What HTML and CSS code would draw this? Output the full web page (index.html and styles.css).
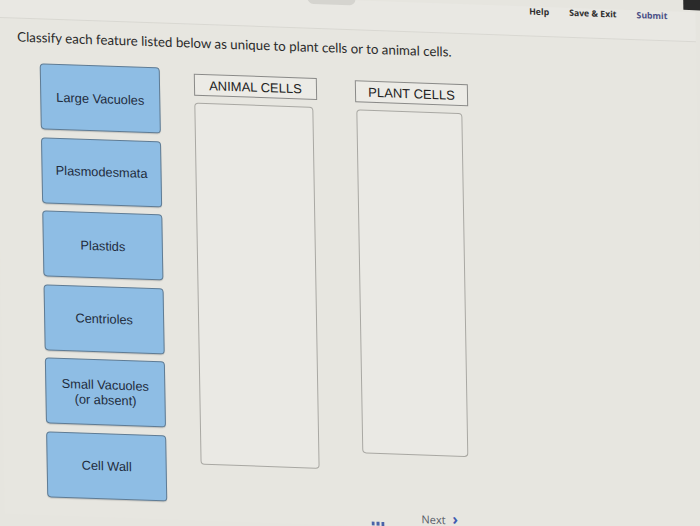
FILE: index.html
```html
<!DOCTYPE html>
<html>
<head>
<meta charset="utf-8">
<link rel="stylesheet" href="styles.css">
</head>
<body>
<div class="screen">
  <div class="handle"></div>
  <div class="bezel"></div>
  <header class="topbar">
    <nav class="nav">
      <span class="nav-item">Help</span>
      <span class="nav-item">Save &amp; Exit</span>
      <span class="nav-item submit">Submit</span>
    </nav>
  </header>
  <main class="main">
    <p class="prompt">Classify each feature listed below as unique to plant cells or to animal cells.</p>
    <div class="workspace">
      <div class="cards">
        <div class="card">Large Vacuoles</div>
        <div class="card">Plasmodesmata</div>
        <div class="card">Plastids</div>
        <div class="card">Centrioles</div>
        <div class="card">Small Vacuoles<br>(or absent)</div>
        <div class="card">Cell Wall</div>
      </div>
      <div class="bins">
        <div class="bin bin-animal">
          <div class="bin-head">ANIMAL CELLS</div>
          <div class="bin-body"></div>
        </div>
        <div class="bin bin-plant">
          <div class="bin-head">PLANT CELLS</div>
          <div class="bin-body"></div>
        </div>
      </div>
    </div>
    <div class="footer">
      <svg class="grid-icon" width="13" height="8" viewBox="0 0 13 8">
        <rect x="0" y="4" width="3" height="4" fill="#4a63a8"/>
        <rect x="5" y="4" width="3" height="4" fill="#4a63a8"/>
        <rect x="10" y="4" width="3" height="4" fill="#4a63a8"/>
      </svg>
      <span class="next">Next <span class="chev">&#x203A;</span></span>
    </div>
  </main>
</div>
</body>
</html>
```

FILE: styles.css
```css
html, body {
  margin: 0;
  padding: 0;
  background: #e6e5df;
  overflow: hidden;
}
.screen {
  position: relative;
  width: 700px;
  height: 526px;
  background: #e7e6e0;
  transform: skew(1deg, 2deg);
  transform-origin: 350px 263px;
  font-family: "Lato", "Liberation Sans", sans-serif;
}
.handle {
  position: absolute;
  left: 312px;
  top: -7px;
  width: 48px;
  height: 12px;
  border-radius: 6px;
  background: #d5d4cf;
}
.bezel {
  position: absolute;
  right: -24px;
  top: -16px;
  width: 36px;
  height: 14px;
  background: #2a2a2a;
}
.topbar {
  height: 30px;
  border-bottom: 1px solid #d9d8d2;
  background: #e9e8e3;
  display: flex;
  justify-content: flex-end;
  align-items: flex-start;
  box-sizing: border-box;
}
.nav {
  display: flex;
  gap: 20px;
  margin-top: -1px;
  margin-right: 28px;
}
.nav-item {
  font-family: "Open Sans", "Liberation Sans", sans-serif;
  font-size: 8.7px;
  font-weight: 700;
  color: #2f2f2f;
}
.nav-item.submit {
  color: #4a4f86;
}
.prompt {
  margin: 10px 0 0 21px;
  font-size: 13.3px;
  line-height: 17px;
  color: #2b2b2b;
}
.workspace {
  display: flex;
  margin: 17px 0 0 43px;
}
.cards {
  display: flex;
  flex-direction: column;
  gap: 7.5px;
}
.card {
  width: 120px;
  height: 66px;
  box-sizing: border-box;
  border: 1.5px solid #5f7c95;
  border-radius: 4px;
  background: #8ebde4;
  box-shadow: 0 1px 1px rgba(0,0,0,0.15);
  display: flex;
  align-items: center;
  justify-content: center;
  text-align: center;
  font-family: "Liberation Sans", Arial, sans-serif;
  font-size: 12.8px;
  line-height: 15px;
  color: #1f2c3d;
}
.bins {
  display: flex;
  gap: 38px;
  margin-left: 34px;
  padding-top: 5px;
}
.bin {
  display: flex;
  flex-direction: column;
  gap: 7px;
}
.bin-animal {
  width: 123px;
}
.bin-plant {
  width: 113px;
  padding-top: 1px;
}
.bin-head {
  height: 22px;
  box-sizing: border-box;
  border: 1.5px solid #8a8a88;
  background: #ecebe6;
  display: flex;
  align-items: center;
  justify-content: center;
  font-family: "Liberation Sans", Arial, sans-serif;
  font-size: 13px;
  color: #222;
}
.bin-body {
  box-sizing: border-box;
  border: 1px solid #a9a8a3;
  border-radius: 4px;
  background: #eae9e4;
}
.bin-animal .bin-body {
  height: 362px;
  margin-right: 4px;
}
.bin-plant .bin-body {
  height: 344px;
  margin: 0 6px 0 1px;
}
.footer {
  display: flex;
  align-items: flex-end;
  gap: 37px;
  margin: 0 0 0 367px;
}
.grid-icon {
  margin-bottom: -1px;
}
.next {
  font-family: "Open Sans", "Liberation Sans", sans-serif;
  font-size: 11px;
  line-height: 14px;
  color: #555a66;
}
.chev {
  color: #3e5bb0;
  font-weight: 700;
  font-size: 15px;
  margin-left: 4px;
}
```
